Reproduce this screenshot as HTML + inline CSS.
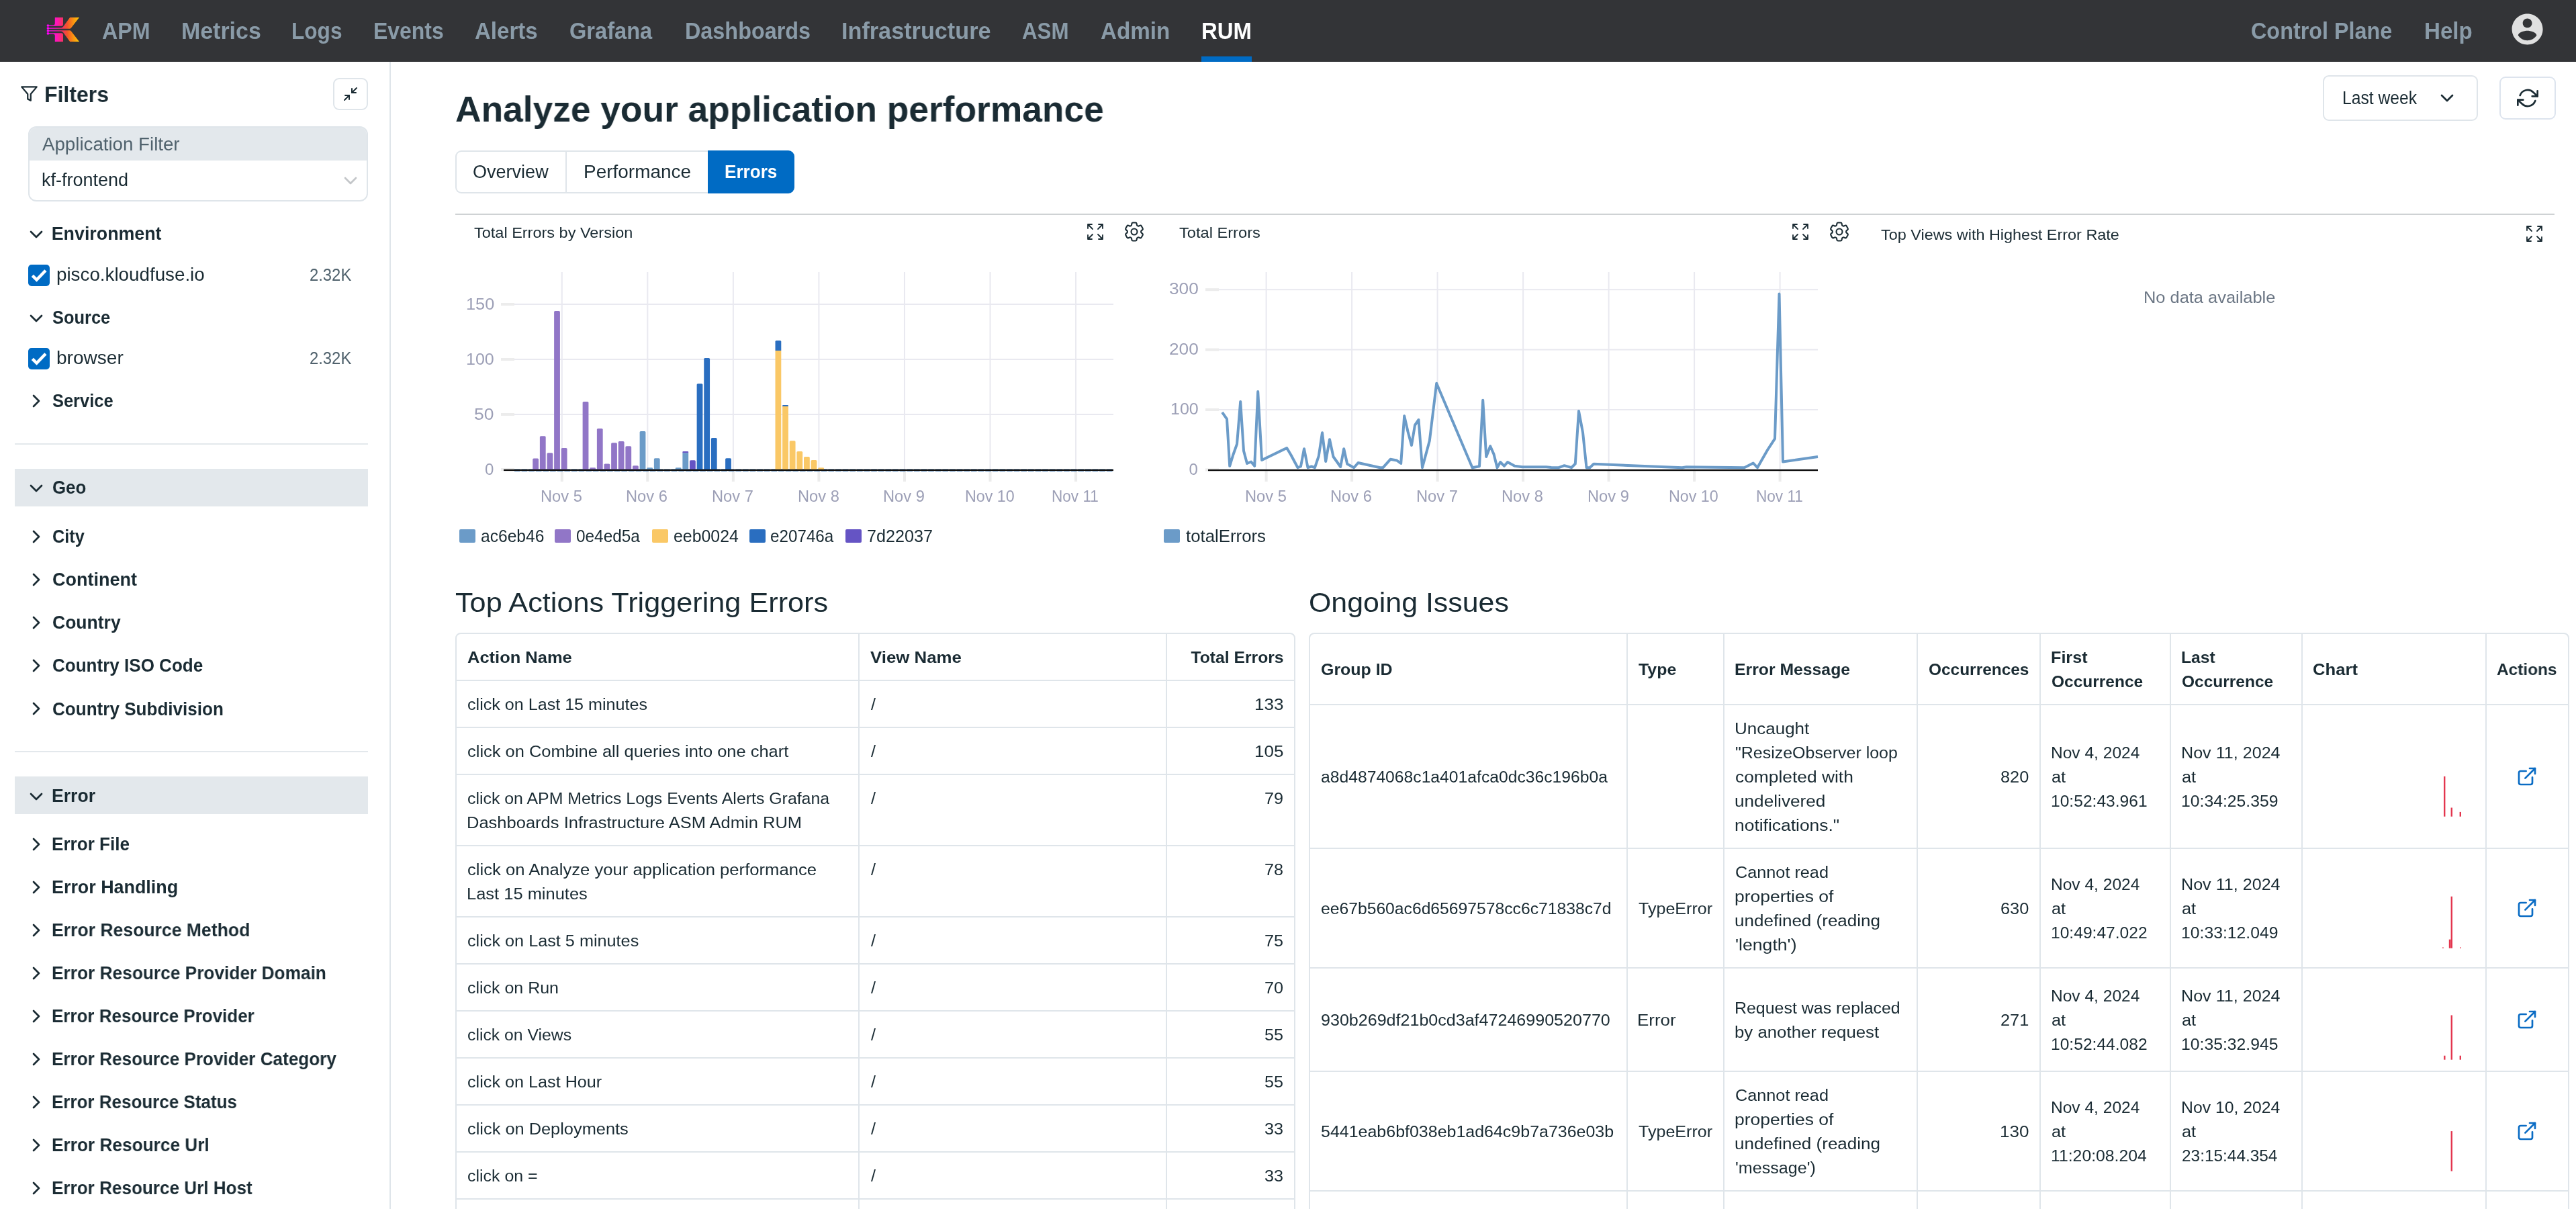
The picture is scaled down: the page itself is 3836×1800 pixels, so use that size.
<!DOCTYPE html><html><head><meta charset="utf-8"><title>RUM</title><style>html,body{margin:0;padding:0}body{width:3836px;height:1800px;position:relative;overflow:hidden;background:#fff;font-family:"Liberation Sans",sans-serif}.t{position:absolute;white-space:pre;display:inline-block;transform-origin:0 0}</style></head><body><div style="position:absolute;left:0;top:0;width:3836px;height:1800px;will-change:transform"><div style="position:absolute;left:0;top:0;width:3836px;height:92px;background:#333437"></div><svg style="position:absolute;left:66px;top:22px" width="56" height="44" viewBox="66 22 56 44">
<defs><linearGradient id="lg" gradientUnits="userSpaceOnUse" x1="70" y1="0" x2="118" y2="0">
<stop offset="0" stop-color="#ff00ff"/><stop offset="0.28" stop-color="#ff14c0"/><stop offset="0.5" stop-color="#f5355e"/><stop offset="0.62" stop-color="#f4522c"/><stop offset="0.8" stop-color="#f98e12"/><stop offset="1" stop-color="#ffc808"/></linearGradient></defs>
<g fill="url(#lg)">
<path d="M81.8 25.9H94V36.3Q94 38.8 91.5 38.8H72V37.5H79Q81.8 37.5 81.8 34.6Z"/>
<path d="M81.8 62H94V51.7Q94 49.2 91.5 49.2H72V50.5H79Q81.8 50.5 81.8 53.4Z"/>
<path d="M104.1 25.9H118L105.8 41.8Q105 42.8 103.6 42.8H72V41.5H91.2Q93.3 40.8 94.3 39.4Z"/>
<path d="M104.1 62H118L105.8 46.2Q105 45.2 103.6 45.2H72V46.5H91.2Q93.3 47.2 94.3 48.6Z"/>
<circle cx="71.4" cy="38.1" r="1.8"/><circle cx="71.4" cy="42.1" r="1.8"/><circle cx="71.4" cy="45.9" r="1.8"/><circle cx="71.4" cy="49.9" r="1.8"/>
</g></svg><span class="t" style="top:27.85px;left:151.58px;font-size:35px;line-height:35px;font-weight:700;color:#8a9ba8;transform:scaleX(0.9200);">APM</span><span class="t" style="top:27.85px;left:269.56px;font-size:35px;line-height:35px;font-weight:700;color:#8a9ba8;transform:scaleX(0.9689);">Metrics</span><span class="t" style="top:27.85px;left:434.00px;font-size:35px;line-height:35px;font-weight:700;color:#8a9ba8;transform:scaleX(0.9025);">Logs</span><span class="t" style="top:27.85px;left:555.67px;font-size:35px;line-height:35px;font-weight:700;color:#8a9ba8;transform:scaleX(0.9126);">Events</span><span class="t" style="top:27.85px;left:706.56px;font-size:35px;line-height:35px;font-weight:700;color:#8a9ba8;transform:scaleX(0.9433);">Alerts</span><span class="t" style="top:27.85px;left:847.57px;font-size:35px;line-height:35px;font-weight:700;color:#8a9ba8;transform:scaleX(0.9318);">Grafana</span><span class="t" style="top:27.85px;left:1019.65px;font-size:35px;line-height:35px;font-weight:700;color:#8a9ba8;transform:scaleX(0.9246);">Dashboards</span><span class="t" style="top:27.85px;left:1253.04px;font-size:35px;line-height:35px;font-weight:700;color:#8a9ba8;transform:scaleX(0.9777);">Infrastructure</span><span class="t" style="top:27.85px;left:1522.11px;font-size:35px;line-height:35px;font-weight:700;color:#8a9ba8;transform:scaleX(0.8933);">ASM</span><span class="t" style="top:27.85px;left:1639.05px;font-size:35px;line-height:35px;font-weight:700;color:#8a9ba8;transform:scaleX(0.9481);">Admin</span><span class="t" style="top:27.85px;left:1789.12px;font-size:35px;line-height:35px;font-weight:700;color:#ffffff;transform:scaleX(0.9408);">RUM</span><span class="t" style="top:27.85px;left:3352.08px;font-size:35px;line-height:35px;font-weight:700;color:#8a9ba8;transform:scaleX(0.9244);">Control Plane</span><span class="t" style="top:27.85px;left:3610.11px;font-size:35px;line-height:35px;font-weight:700;color:#8a9ba8;transform:scaleX(0.9452);">Help</span><div style="position:absolute;left:1789px;top:84px;width:75px;height:8px;background:#006bc4"></div><svg style="position:absolute;left:3736.4px;top:16.2px" width="55.2" height="55.2" viewBox="0 0 24 24"><path fill="#e0e0e0" d="M12 2C6.48 2 2 6.48 2 12s4.48 10 10 10 10-4.48 10-10S17.52 2 12 2zm0 3c1.66 0 3 1.34 3 3s-1.34 3-3 3-3-1.34-3-3 1.34-3 3-3zm0 14.2c-2.5 0-4.71-1.28-6-3.22.03-1.99 4-3.08 6-3.08 1.99 0 5.97 1.09 6 3.08-1.29 1.94-3.5 3.22-6 3.22z"/></svg><div style="position:absolute;left:580px;top:92px;width:2px;height:1708px;background:#dfe5ea"></div><svg style="position:absolute;left:30px;top:126.3px" width="27" height="27" viewBox="0 0 24 24" fill="none" stroke="#1a2b33" stroke-width="2" stroke-linecap="round" stroke-linejoin="round"><polygon points="22 3 2 3 10 12.46 10 19 14 21 14 12.46 22 3"/></svg><span class="t" style="top:124.25px;left:65.86px;font-size:33px;line-height:33px;font-weight:700;color:#1a2b33;transform:scaleX(0.9688);">Filters</span><div style="position:absolute;left:496px;top:116px;width:48px;height:44px;border:2px solid #dfe5ea;border-radius:9px"></div><svg style="position:absolute;left:510.1px;top:128.1px" width="24" height="24" viewBox="0 0 24 24" fill="none" stroke="#1a2b33" stroke-width="2" stroke-linecap="round" stroke-linejoin="round"><polyline points="4 14 10 14 10 20"/><polyline points="20 10 14 10 14 4"/><line x1="14" y1="10" x2="21" y2="3"/><line x1="3" y1="21" x2="10" y2="14"/></svg><div style="position:absolute;left:42px;top:188px;width:502px;height:108px;border:2px solid #dfe5ea;border-radius:12px;overflow:hidden"><div style="position:absolute;left:-2px;top:-2px;width:506px;height:51px;background:#e3e8ec;border-radius:10px 10px 0 0"></div></div><span class="t" style="top:201.82px;left:62.50px;font-size:26.8px;line-height:26.8px;font-weight:400;color:#50626d;transform:scaleX(1.0328);">Application Filter</span><span class="t" style="top:254.82px;left:62.48px;font-size:26.8px;line-height:26.8px;font-weight:400;color:#1a2b33;transform:scaleX(1.0080);">kf-frontend</span><svg style="position:absolute;left:505.5px;top:253px" width="32" height="32" viewBox="0 0 24 24" fill="none" stroke="#c3c6c9" stroke-width="2" stroke-linecap="round" stroke-linejoin="round"><polyline points="6 9 12 15 18 9"/></svg><svg style="position:absolute;left:38.3px;top:333.1px" width="32" height="32" viewBox="0 0 24 24" fill="none" stroke="#1a2b33" stroke-width="2" stroke-linecap="round" stroke-linejoin="round"><polyline points="6 9 12 15 18 9"/></svg><span class="t" style="top:335.32px;left:76.75px;font-size:26.8px;line-height:26.8px;font-weight:700;color:#1a2b33;">Environment</span><div style="position:absolute;left:42px;top:394px;width:32px;height:32px;border-radius:5px;background:#006bc4"></div><svg style="position:absolute;left:42px;top:394px" width="32" height="32" viewBox="0 0 32 32" fill="none" stroke="#fff" stroke-width="4.5" stroke-linecap="butt" stroke-linejoin="miter"><polyline points="6.3 16.3 12.6 22.5 25.9 8.8"/></svg><span class="t" style="top:395.82px;left:83.53px;font-size:26.8px;line-height:26.8px;font-weight:400;color:#1a2b33;transform:scaleX(1.0362);">pisco.kloudfuse.io</span><span class="t" style="top:397.35px;left:461.05px;font-size:25px;line-height:25px;font-weight:400;color:#50626d;transform:scaleX(0.9531);">2.32K</span><svg style="position:absolute;left:38.3px;top:457.6px" width="32" height="32" viewBox="0 0 24 24" fill="none" stroke="#1a2b33" stroke-width="2" stroke-linecap="round" stroke-linejoin="round"><polyline points="6 9 12 15 18 9"/></svg><span class="t" style="top:459.82px;left:77.80px;font-size:26.8px;line-height:26.8px;font-weight:700;color:#1a2b33;transform:scaleX(0.9494);">Source</span><div style="position:absolute;left:42px;top:518px;width:32px;height:32px;border-radius:5px;background:#006bc4"></div><svg style="position:absolute;left:42px;top:518px" width="32" height="32" viewBox="0 0 32 32" fill="none" stroke="#fff" stroke-width="4.5" stroke-linecap="butt" stroke-linejoin="miter"><polyline points="6.3 16.3 12.6 22.5 25.9 8.8"/></svg><span class="t" style="top:519.82px;left:83.51px;font-size:26.8px;line-height:26.8px;font-weight:400;color:#1a2b33;transform:scaleX(1.0473);">browser</span><span class="t" style="top:521.35px;left:461.05px;font-size:25px;line-height:25px;font-weight:400;color:#50626d;transform:scaleX(0.9531);">2.32K</span><svg style="position:absolute;left:38.2px;top:580.5px" width="32" height="32" viewBox="0 0 24 24" fill="none" stroke="#1a2b33" stroke-width="2" stroke-linecap="round" stroke-linejoin="round"><polyline points="9 18 15 12 9 6"/></svg><span class="t" style="top:583.82px;left:77.80px;font-size:26.8px;line-height:26.8px;font-weight:700;color:#1a2b33;transform:scaleX(0.9495);">Service</span><div style="position:absolute;left:22px;top:660px;width:526px;height:2px;background:#e3e8ec"></div><div style="position:absolute;left:22px;top:698px;width:526px;height:56px;background:#e3e8ec"></div><svg style="position:absolute;left:38.3px;top:711.1px" width="32" height="32" viewBox="0 0 24 24" fill="none" stroke="#1a2b33" stroke-width="2" stroke-linecap="round" stroke-linejoin="round"><polyline points="6 9 12 15 18 9"/></svg><span class="t" style="top:713.32px;left:77.78px;font-size:26.8px;line-height:26.8px;font-weight:700;color:#1a2b33;transform:scaleX(0.9650);">Geo</span><svg style="position:absolute;left:38.2px;top:782.5px" width="32" height="32" viewBox="0 0 24 24" fill="none" stroke="#1a2b33" stroke-width="2" stroke-linecap="round" stroke-linejoin="round"><polyline points="9 18 15 12 9 6"/></svg><span class="t" style="top:785.82px;left:77.81px;font-size:26.8px;line-height:26.8px;font-weight:700;color:#1a2b33;transform:scaleX(0.9450);">City</span><svg style="position:absolute;left:38.2px;top:846.7px" width="32" height="32" viewBox="0 0 24 24" fill="none" stroke="#1a2b33" stroke-width="2" stroke-linecap="round" stroke-linejoin="round"><polyline points="9 18 15 12 9 6"/></svg><span class="t" style="top:850.02px;left:77.74px;font-size:26.8px;line-height:26.8px;font-weight:700;color:#1a2b33;transform:scaleX(1.0081);">Continent</span><svg style="position:absolute;left:38.2px;top:910.9px" width="32" height="32" viewBox="0 0 24 24" fill="none" stroke="#1a2b33" stroke-width="2" stroke-linecap="round" stroke-linejoin="round"><polyline points="9 18 15 12 9 6"/></svg><span class="t" style="top:914.22px;left:77.76px;font-size:26.8px;line-height:26.8px;font-weight:700;color:#1a2b33;transform:scaleX(0.9902);">Country</span><svg style="position:absolute;left:38.2px;top:975.1px" width="32" height="32" viewBox="0 0 24 24" fill="none" stroke="#1a2b33" stroke-width="2" stroke-linecap="round" stroke-linejoin="round"><polyline points="9 18 15 12 9 6"/></svg><span class="t" style="top:978.42px;left:77.78px;font-size:26.8px;line-height:26.8px;font-weight:700;color:#1a2b33;transform:scaleX(0.9716);">Country ISO Code</span><svg style="position:absolute;left:38.2px;top:1039.3px" width="32" height="32" viewBox="0 0 24 24" fill="none" stroke="#1a2b33" stroke-width="2" stroke-linecap="round" stroke-linejoin="round"><polyline points="9 18 15 12 9 6"/></svg><span class="t" style="top:1042.62px;left:77.78px;font-size:26.8px;line-height:26.8px;font-weight:700;color:#1a2b33;transform:scaleX(0.9731);">Country Subdivision</span><div style="position:absolute;left:22px;top:1118px;width:526px;height:2px;background:#e3e8ec"></div><div style="position:absolute;left:22px;top:1156px;width:526px;height:56px;background:#e3e8ec"></div><svg style="position:absolute;left:38.3px;top:1169.6px" width="32" height="32" viewBox="0 0 24 24" fill="none" stroke="#1a2b33" stroke-width="2" stroke-linecap="round" stroke-linejoin="round"><polyline points="6 9 12 15 18 9"/></svg><span class="t" style="top:1171.82px;left:76.77px;font-size:26.8px;line-height:26.8px;font-weight:700;color:#1a2b33;transform:scaleX(0.9921);">Error</span><svg style="position:absolute;left:38.2px;top:1240.9px" width="32" height="32" viewBox="0 0 24 24" fill="none" stroke="#1a2b33" stroke-width="2" stroke-linecap="round" stroke-linejoin="round"><polyline points="9 18 15 12 9 6"/></svg><span class="t" style="top:1244.22px;left:76.80px;font-size:26.8px;line-height:26.8px;font-weight:700;color:#1a2b33;transform:scaleX(0.9741);">Error File</span><svg style="position:absolute;left:38.2px;top:1304.9px" width="32" height="32" viewBox="0 0 24 24" fill="none" stroke="#1a2b33" stroke-width="2" stroke-linecap="round" stroke-linejoin="round"><polyline points="9 18 15 12 9 6"/></svg><span class="t" style="top:1308.22px;left:76.74px;font-size:26.8px;line-height:26.8px;font-weight:700;color:#1a2b33;transform:scaleX(1.0027);">Error Handling</span><svg style="position:absolute;left:38.2px;top:1368.9px" width="32" height="32" viewBox="0 0 24 24" fill="none" stroke="#1a2b33" stroke-width="2" stroke-linecap="round" stroke-linejoin="round"><polyline points="9 18 15 12 9 6"/></svg><span class="t" style="top:1372.22px;left:76.77px;font-size:26.8px;line-height:26.8px;font-weight:700;color:#1a2b33;transform:scaleX(0.9915);">Error Resource Method</span><svg style="position:absolute;left:38.2px;top:1432.9px" width="32" height="32" viewBox="0 0 24 24" fill="none" stroke="#1a2b33" stroke-width="2" stroke-linecap="round" stroke-linejoin="round"><polyline points="9 18 15 12 9 6"/></svg><span class="t" style="top:1436.22px;left:76.79px;font-size:26.8px;line-height:26.8px;font-weight:700;color:#1a2b33;transform:scaleX(0.9806);">Error Resource Provider Domain</span><svg style="position:absolute;left:38.2px;top:1496.9px" width="32" height="32" viewBox="0 0 24 24" fill="none" stroke="#1a2b33" stroke-width="2" stroke-linecap="round" stroke-linejoin="round"><polyline points="9 18 15 12 9 6"/></svg><span class="t" style="top:1500.22px;left:76.81px;font-size:26.8px;line-height:26.8px;font-weight:700;color:#1a2b33;transform:scaleX(0.9693);">Error Resource Provider</span><svg style="position:absolute;left:38.2px;top:1560.9px" width="32" height="32" viewBox="0 0 24 24" fill="none" stroke="#1a2b33" stroke-width="2" stroke-linecap="round" stroke-linejoin="round"><polyline points="9 18 15 12 9 6"/></svg><span class="t" style="top:1564.22px;left:76.80px;font-size:26.8px;line-height:26.8px;font-weight:700;color:#1a2b33;transform:scaleX(0.9746);">Error Resource Provider Category</span><svg style="position:absolute;left:38.2px;top:1624.9px" width="32" height="32" viewBox="0 0 24 24" fill="none" stroke="#1a2b33" stroke-width="2" stroke-linecap="round" stroke-linejoin="round"><polyline points="9 18 15 12 9 6"/></svg><span class="t" style="top:1628.22px;left:76.81px;font-size:26.8px;line-height:26.8px;font-weight:700;color:#1a2b33;transform:scaleX(0.9698);">Error Resource Status</span><svg style="position:absolute;left:38.2px;top:1688.9px" width="32" height="32" viewBox="0 0 24 24" fill="none" stroke="#1a2b33" stroke-width="2" stroke-linecap="round" stroke-linejoin="round"><polyline points="9 18 15 12 9 6"/></svg><span class="t" style="top:1692.22px;left:76.79px;font-size:26.8px;line-height:26.8px;font-weight:700;color:#1a2b33;transform:scaleX(0.9788);">Error Resource Url</span><svg style="position:absolute;left:38.2px;top:1752.9px" width="32" height="32" viewBox="0 0 24 24" fill="none" stroke="#1a2b33" stroke-width="2" stroke-linecap="round" stroke-linejoin="round"><polyline points="9 18 15 12 9 6"/></svg><span class="t" style="top:1756.22px;left:76.80px;font-size:26.8px;line-height:26.8px;font-weight:700;color:#1a2b33;transform:scaleX(0.9738);">Error Resource Url Host</span><span class="t" style="top:136.38px;left:677.75px;font-size:53.5px;line-height:53.5px;font-weight:700;color:#1a2b33;transform:scaleX(0.9964);">Analyze your application performance</span><div style="position:absolute;left:678px;top:224px;width:376px;height:60px;border:2px solid #dfe5ea;border-right:none;border-radius:9px 0 0 9px"></div><div style="position:absolute;left:842px;top:224px;width:2px;height:64px;background:#dfe5ea"></div><div style="position:absolute;left:1054px;top:224px;width:129px;height:64px;background:#006bc4;border-radius:0 9px 9px 0"></div><span class="t" style="top:243.32px;left:703.99px;font-size:26.8px;line-height:26.8px;font-weight:400;color:#1a2b33;transform:scaleX(1.0090);">Overview</span><span class="t" style="top:243.32px;left:868.66px;font-size:26.8px;line-height:26.8px;font-weight:400;color:#1a2b33;transform:scaleX(1.0433);">Performance</span><span class="t" style="top:243.32px;left:1079.05px;font-size:26.8px;line-height:26.8px;font-weight:700;color:#ffffff;transform:scaleX(0.9740);">Errors</span><div style="position:absolute;left:3459px;top:112px;width:227px;height:64px;border:2px solid #dfe5ea;border-radius:9px"></div><span class="t" style="top:132.82px;left:3488.16px;font-size:26.8px;line-height:26.8px;font-weight:400;color:#1a2b33;transform:scaleX(0.9202);">Last week</span><svg style="position:absolute;left:3627.8px;top:130px" width="32" height="32" viewBox="0 0 24 24" fill="none" stroke="#1a2b33" stroke-width="2" stroke-linecap="round" stroke-linejoin="round"><polyline points="6 9 12 15 18 9"/></svg><div style="position:absolute;left:3722px;top:114px;width:80px;height:60px;border:2px solid #dde4ee;border-radius:9px"></div><svg style="position:absolute;left:3748px;top:130.1px" width="32" height="32" viewBox="0 0 24 24" fill="none" stroke="#1a2b33" stroke-width="2" stroke-linecap="round" stroke-linejoin="round"><polyline points="23 4 23 10 17 10"/><polyline points="1 20 1 14 7 14"/><path d="M3.51 9a9 9 0 0 1 14.85-3.36L23 10M1 14l4.64 4.36A9 9 0 0 0 20.49 15"/></svg><div style="position:absolute;left:678px;top:318px;width:3126px;height:2px;background:#cfd2d4"></div><span class="t" style="top:335.06px;left:706.00px;font-size:22.7px;line-height:22.7px;font-weight:400;color:#1a2b33;transform:scaleX(1.0352);">Total Errors by Version</span><svg style="position:absolute;left:1615px;top:329px" width="32" height="32" viewBox="0 0 24 24" fill="none" stroke="#1a2b33" stroke-width="1.35" stroke-linecap="round" stroke-linejoin="round"><path d="M3.75 3.75v4.5m0-4.5h4.5m-4.5 0L9 9M3.75 20.25v-4.5m0 4.5h4.5m-4.5 0L9 15M20.25 3.75h-4.5m4.5 0v4.5m0-4.5L15 9m5.25 11.25h-4.5m4.5 0v-4.5m0 4.5L15 15"/></svg><svg style="position:absolute;left:1670.95px;top:326.65px" width="36" height="36" viewBox="0 0 24 24" fill="none" stroke="#1a2b33" stroke-width="1.4" stroke-linecap="round" stroke-linejoin="round"><path d="M9.594 3.94c.09-.542.56-.94 1.11-.94h2.593c.55 0 1.02.398 1.11.94l.213 1.281c.063.374.313.686.645.87.074.04.147.083.22.127.325.196.72.257 1.075.124l1.217-.456a1.125 1.125 0 0 1 1.37.49l1.296 2.247a1.125 1.125 0 0 1-.26 1.431l-1.003.827c-.293.241-.438.613-.43.992a7.723 7.723 0 0 1 0 .255c-.008.378.137.75.43.991l1.004.827c.424.35.534.955.26 1.43l-1.298 2.247a1.125 1.125 0 0 1-1.369.491l-1.217-.456c-.355-.133-.75-.072-1.076.124a6.47 6.47 0 0 1-.22.128c-.331.183-.581.495-.644.869l-.213 1.281c-.09.543-.56.94-1.11.94h-2.594c-.55 0-1.019-.398-1.11-.94l-.213-1.281c-.062-.374-.312-.686-.644-.87a6.52 6.52 0 0 1-.22-.127c-.325-.196-.72-.257-1.076-.124l-1.217.456a1.125 1.125 0 0 1-1.369-.49l-1.297-2.247a1.125 1.125 0 0 1 .26-1.431l1.004-.827c.292-.24.437-.613.43-.991a6.932 6.932 0 0 1 0-.255c.007-.38-.138-.751-.43-.992l-1.004-.827a1.125 1.125 0 0 1-.26-1.43l1.297-2.247a1.125 1.125 0 0 1 1.37-.491l1.216.456c.356.133.751.072 1.076-.124.072-.044.146-.086.22-.128.332-.183.582-.495.644-.869l.214-1.28Z"/><path d="M15 12a3 3 0 1 1-6 0 3 3 0 0 1 6 0Z"/></svg><span class="t" style="top:335.31px;left:1755.60px;font-size:22.7px;line-height:22.7px;font-weight:400;color:#1a2b33;transform:scaleX(1.0417);">Total Errors</span><svg style="position:absolute;left:2665px;top:329px" width="32" height="32" viewBox="0 0 24 24" fill="none" stroke="#1a2b33" stroke-width="1.35" stroke-linecap="round" stroke-linejoin="round"><path d="M3.75 3.75v4.5m0-4.5h4.5m-4.5 0L9 9M3.75 20.25v-4.5m0 4.5h4.5m-4.5 0L9 15M20.25 3.75h-4.5m4.5 0v4.5m0-4.5L15 9m5.25 11.25h-4.5m4.5 0v-4.5m0 4.5L15 15"/></svg><svg style="position:absolute;left:2720.95px;top:326.65px" width="36" height="36" viewBox="0 0 24 24" fill="none" stroke="#1a2b33" stroke-width="1.4" stroke-linecap="round" stroke-linejoin="round"><path d="M9.594 3.94c.09-.542.56-.94 1.11-.94h2.593c.55 0 1.02.398 1.11.94l.213 1.281c.063.374.313.686.645.87.074.04.147.083.22.127.325.196.72.257 1.075.124l1.217-.456a1.125 1.125 0 0 1 1.37.49l1.296 2.247a1.125 1.125 0 0 1-.26 1.431l-1.003.827c-.293.241-.438.613-.43.992a7.723 7.723 0 0 1 0 .255c-.008.378.137.75.43.991l1.004.827c.424.35.534.955.26 1.43l-1.298 2.247a1.125 1.125 0 0 1-1.369.491l-1.217-.456c-.355-.133-.75-.072-1.076.124a6.47 6.47 0 0 1-.22.128c-.331.183-.581.495-.644.869l-.213 1.281c-.09.543-.56.94-1.11.94h-2.594c-.55 0-1.019-.398-1.11-.94l-.213-1.281c-.062-.374-.312-.686-.644-.87a6.52 6.52 0 0 1-.22-.127c-.325-.196-.72-.257-1.076-.124l-1.217.456a1.125 1.125 0 0 1-1.369-.49l-1.297-2.247a1.125 1.125 0 0 1 .26-1.431l1.004-.827c.292-.24.437-.613.43-.991a6.932 6.932 0 0 1 0-.255c.007-.38-.138-.751-.43-.992l-1.004-.827a1.125 1.125 0 0 1-.26-1.43l1.297-2.247a1.125 1.125 0 0 1 1.37-.491l1.216.456c.356.133.751.072 1.076-.124.072-.044.146-.086.22-.128.332-.183.582-.495.644-.869l.214-1.28Z"/><path d="M15 12a3 3 0 1 1-6 0 3 3 0 0 1 6 0Z"/></svg><span class="t" style="top:338.31px;left:2800.50px;font-size:22.7px;line-height:22.7px;font-weight:400;color:#1a2b33;transform:scaleX(1.0321);">Top Views with Highest Error Rate</span><svg style="position:absolute;left:3758px;top:332px" width="32" height="32" viewBox="0 0 24 24" fill="none" stroke="#1a2b33" stroke-width="1.35" stroke-linecap="round" stroke-linejoin="round"><path d="M3.75 3.75v4.5m0-4.5h4.5m-4.5 0L9 9M3.75 20.25v-4.5m0 4.5h4.5m-4.5 0L9 15M20.25 3.75h-4.5m4.5 0v4.5m0-4.5L15 9m5.25 11.25h-4.5m4.5 0v-4.5m0 4.5L15 15"/></svg><span class="t" style="top:430.61px;left:3192.44px;font-size:24.7px;line-height:24.7px;font-weight:400;color:#6b7684;transform:scaleX(1.0293);">No data available</span><svg style="position:absolute;left:0;top:380px" width="3836" height="460" viewBox="0 380 3836 460"><rect x="835.75" y="405" width="2" height="295" fill="#e9e9f0"/><rect x="834.75" y="700" width="4" height="17" fill="#ececec"/><rect x="963.3" y="405" width="2" height="295" fill="#e9e9f0"/><rect x="962.3" y="700" width="4" height="17" fill="#ececec"/><rect x="1090.85" y="405" width="2" height="295" fill="#e9e9f0"/><rect x="1089.85" y="700" width="4" height="17" fill="#ececec"/><rect x="1218.4" y="405" width="2" height="295" fill="#e9e9f0"/><rect x="1217.4" y="700" width="4" height="17" fill="#ececec"/><rect x="1345.95" y="405" width="2" height="295" fill="#e9e9f0"/><rect x="1344.95" y="700" width="4" height="17" fill="#ececec"/><rect x="1473.5" y="405" width="2" height="295" fill="#e9e9f0"/><rect x="1472.5" y="700" width="4" height="17" fill="#ececec"/><rect x="1601.05" y="405" width="2" height="295" fill="#e9e9f0"/><rect x="1600.05" y="700" width="4" height="17" fill="#ececec"/><rect x="766" y="452" width="892" height="2" fill="#e9e9f0"/><rect x="746" y="451" width="20" height="4" fill="#ececec"/><rect x="766" y="534" width="892" height="2" fill="#e9e9f0"/><rect x="746" y="533" width="20" height="4" fill="#ececec"/><rect x="766" y="616" width="892" height="2" fill="#e9e9f0"/><rect x="746" y="615" width="20" height="4" fill="#ececec"/><rect x="766" y="698" width="892" height="2" fill="#e9e9f0"/><rect x="746" y="697" width="20" height="4" fill="#ececec"/><line x1="766" y1="700.2" x2="1658" y2="700.2" stroke="#3f7fc0" stroke-width="3.2" stroke-dasharray="8.6 2.025"/><path d="M793.25 699.00V684.10Q793.25 682.50 794.85 682.50H800.45Q802.05 682.50 802.05 684.10V699.00Z" fill="#9176c7"/><path d="M803.88 699.00V650.85Q803.88 649.25 805.48 649.25H811.07Q812.67 649.25 812.67 650.85V699.00Z" fill="#9176c7"/><path d="M814.50 699.00V675.85Q814.50 674.25 816.10 674.25H821.70Q823.30 674.25 823.30 675.85V699.00Z" fill="#9176c7"/><path d="M825.12 699.00V464.60Q825.12 463.00 826.73 463.00H832.32Q833.92 463.00 833.92 464.60V699.00Z" fill="#9176c7"/><path d="M835.75 699.00V668.60Q835.75 667.00 837.35 667.00H842.95Q844.55 667.00 844.55 668.60V699.00Z" fill="#9176c7"/><path d="M867.62 699.00V599.60Q867.62 598.00 869.23 598.00H874.82Q876.42 598.00 876.42 599.60V699.00Z" fill="#9176c7"/><path d="M878.25 699.00V697.65Q878.25 696.30 879.60 696.30H885.70Q887.05 696.30 887.05 697.65V699.00Z" fill="#9176c7"/><path d="M888.88 699.00V639.60Q888.88 638.00 890.48 638.00H896.07Q897.67 638.00 897.67 639.60V699.00Z" fill="#9176c7"/><path d="M899.50 699.00V692.10Q899.50 690.50 901.10 690.50H906.70Q908.30 690.50 908.30 692.10V699.00Z" fill="#9176c7"/><path d="M910.12 699.00V660.80Q910.12 659.20 911.73 659.20H917.32Q918.92 659.20 918.92 660.80V699.00Z" fill="#9176c7"/><path d="M920.75 699.00V658.60Q920.75 657.00 922.35 657.00H927.95Q929.55 657.00 929.55 658.60V699.00Z" fill="#9176c7"/><path d="M931.38 699.00V665.80Q931.38 664.20 932.98 664.20H938.57Q940.17 664.20 940.17 665.80V699.00Z" fill="#9176c7"/><path d="M942.00 699.00V694.80Q942.00 693.20 943.60 693.20H949.20Q950.80 693.20 950.80 694.80V699.00Z" fill="#9176c7"/><path d="M952.62 699.00V643.60Q952.62 642.00 954.23 642.00H959.82Q961.42 642.00 961.42 643.60V699.00Z" fill="#6b9bc8"/><path d="M963.25 699.00V697.65Q963.25 696.30 964.60 696.30H970.70Q972.05 696.30 972.05 697.65V699.00Z" fill="#6b9bc8"/><path d="M973.88 699.00V683.80Q973.88 682.20 975.48 682.20H981.07Q982.67 682.20 982.67 683.80V699.00Z" fill="#6b9bc8"/><path d="M1005.75 699.00V697.65Q1005.75 696.30 1007.10 696.30H1013.20Q1014.55 696.30 1014.55 697.65V699.00Z" fill="#6b9bc8"/><rect x="1016.38" y="674.20" width="8.8" height="24.80" fill="#6b9bc8"/><path d="M1016.38 674.20V673.10Q1016.38 672.00 1017.48 672.00H1024.07Q1025.17 672.00 1025.17 673.10V674.20Z" fill="#6554c4"/><path d="M1027.00 699.00V686.80Q1027.00 685.20 1028.60 685.20H1034.20Q1035.80 685.20 1035.80 686.80V699.00Z" fill="#6554c4"/><path d="M1037.62 699.00V572.80Q1037.62 571.20 1039.22 571.20H1044.83Q1046.42 571.20 1046.42 572.80V699.00Z" fill="#2a6ec0"/><path d="M1048.25 699.00V534.60Q1048.25 533.00 1049.85 533.00H1055.45Q1057.05 533.00 1057.05 534.60V699.00Z" fill="#2a6ec0"/><path d="M1058.88 699.00V653.60Q1058.88 652.00 1060.47 652.00H1066.08Q1067.67 652.00 1067.67 653.60V699.00Z" fill="#2a6ec0"/><path d="M1080.12 699.00V683.80Q1080.12 682.20 1081.72 682.20H1087.33Q1088.92 682.20 1088.92 683.80V699.00Z" fill="#2a6ec0"/><rect x="1154.50" y="522.00" width="8.8" height="177.00" fill="#fac866"/><path d="M1154.50 522.00V508.60Q1154.50 507.00 1156.10 507.00H1161.70Q1163.30 507.00 1163.30 508.60V522.00Z" fill="#2a6ec0"/><rect x="1165.12" y="605.00" width="8.8" height="94.00" fill="#fac866"/><path d="M1165.12 605.00V604.00Q1165.12 603.00 1166.12 603.00H1172.92Q1173.92 603.00 1173.92 604.00V605.00Z" fill="#2a6ec0"/><path d="M1175.75 699.00V657.80Q1175.75 656.20 1177.35 656.20H1182.95Q1184.55 656.20 1184.55 657.80V699.00Z" fill="#fac866"/><path d="M1186.38 699.00V673.60Q1186.38 672.00 1187.97 672.00H1193.58Q1195.17 672.00 1195.17 673.60V699.00Z" fill="#fac866"/><path d="M1197.00 699.00V681.60Q1197.00 680.00 1198.60 680.00H1204.20Q1205.80 680.00 1205.80 681.60V699.00Z" fill="#fac866"/><path d="M1207.62 699.00V686.60Q1207.62 685.00 1209.22 685.00H1214.83Q1216.42 685.00 1216.42 686.60V699.00Z" fill="#fac866"/><path d="M1218.25 699.00V697.65Q1218.25 696.30 1219.60 696.30H1225.70Q1227.05 696.30 1227.05 697.65V699.00Z" fill="#fac866"/><rect x="750" y="698.7" width="908" height="2.4" fill="#111"/><rect x="1884.6" y="405" width="2" height="295" fill="#e9e9f0"/><rect x="1883.6" y="700" width="4" height="17" fill="#ececec"/><rect x="2012.1" y="405" width="2" height="295" fill="#e9e9f0"/><rect x="2011.1" y="700" width="4" height="17" fill="#ececec"/><rect x="2139.6" y="405" width="2" height="295" fill="#e9e9f0"/><rect x="2138.6" y="700" width="4" height="17" fill="#ececec"/><rect x="2267.1" y="405" width="2" height="295" fill="#e9e9f0"/><rect x="2266.1" y="700" width="4" height="17" fill="#ececec"/><rect x="2394.6" y="405" width="2" height="295" fill="#e9e9f0"/><rect x="2393.6" y="700" width="4" height="17" fill="#ececec"/><rect x="2522.1" y="405" width="2" height="295" fill="#e9e9f0"/><rect x="2521.1" y="700" width="4" height="17" fill="#ececec"/><rect x="2649.6" y="405" width="2" height="295" fill="#e9e9f0"/><rect x="2648.6" y="700" width="4" height="17" fill="#ececec"/><rect x="1815" y="430.2" width="892" height="2" fill="#e9e9f0"/><rect x="1795" y="429.2" width="20" height="4" fill="#ececec"/><rect x="1815" y="519.6" width="892" height="2" fill="#e9e9f0"/><rect x="1795" y="518.6" width="20" height="4" fill="#ececec"/><rect x="1815" y="609" width="892" height="2" fill="#e9e9f0"/><rect x="1795" y="608" width="20" height="4" fill="#ececec"/><rect x="1815" y="698.4" width="892" height="2" fill="#e9e9f0"/><rect x="1795" y="697.4" width="20" height="4" fill="#ececec"/><polyline fill="none" stroke="#6b9bc8" stroke-width="4" stroke-linejoin="round" stroke-linecap="butt" points="1820.0,613.8 1827.0,623.8 1831.2,693.8 1836.2,677.5 1842.0,661.2 1847.2,598.0 1852.0,671.2 1857.0,690.0 1863.0,687.5 1868.2,693.8 1873.2,583.0 1879.0,685.0 1916.2,667.0 1922.5,677.5 1932.5,696.2 1937.0,694.5 1942.0,668.2 1947.5,696.2 1953.0,694.5 1958.0,696.2 1963.8,678.8 1969.0,644.2 1974.2,687.0 1980.0,654.2 1985.5,680.0 1996.2,695.0 2001.2,668.2 2006.2,690.8 2016.2,696.2 2022.5,689.0 2055.0,696.2 2059.5,696.2 2070.5,683.8 2080.0,685.5 2086.2,690.0 2091.2,619.2 2096.5,642.5 2102.0,663.0 2107.0,633.0 2112.5,625.0 2118.0,696.2 2128.8,656.2 2139.2,570.8 2192.5,696.2 2203.0,694.2 2208.2,595.8 2213.2,680.0 2219.2,664.2 2224.5,676.2 2229.5,696.2 2234.2,688.0 2240.0,693.8 2245.0,688.0 2255.5,693.8 2267.0,695.2 2302.5,695.2 2310.0,696.0 2321.2,696.2 2329.5,693.2 2340.0,696.2 2345.8,690.5 2351.0,612.0 2357.0,643.8 2362.5,696.2 2367.5,696.2 2373.2,690.8 2505.0,696.2 2511.2,695.2 2597.5,696.2 2610.8,689.5 2617.0,696.2 2632.0,670.0 2643.0,653.2 2649.5,437.5 2655.0,687.5 2707.0,680.0"/><rect x="1799" y="698.8" width="908" height="2.4" fill="#111"/></svg><span class="t" style="top:440.60px;left:693.89px;font-size:24px;line-height:24px;font-weight:400;color:#9c9fb6;transform:scaleX(1.0541);">150</span><span class="t" style="top:522.60px;left:694.31px;font-size:24px;line-height:24px;font-weight:400;color:#9c9fb6;transform:scaleX(1.0432);">100</span><span class="t" style="top:604.60px;left:706.40px;font-size:24px;line-height:24px;font-weight:400;color:#9c9fb6;transform:scaleX(1.1000);">50</span><span class="t" style="top:686.60px;left:722.00px;font-size:24px;line-height:24px;font-weight:400;color:#9c9fb6;">0</span><span class="t" style="top:418.40px;left:1741.01px;font-size:24px;line-height:24px;font-weight:400;color:#9c9fb6;transform:scaleX(1.0921);">300</span><span class="t" style="top:507.80px;left:1741.01px;font-size:24px;line-height:24px;font-weight:400;color:#9c9fb6;transform:scaleX(1.0921);">200</span><span class="t" style="top:597.20px;left:1742.91px;font-size:24px;line-height:24px;font-weight:400;color:#9c9fb6;transform:scaleX(1.0432);">100</span><span class="t" style="top:686.60px;left:1770.60px;font-size:24px;line-height:24px;font-weight:400;color:#9c9fb6;">0</span><span class="t" style="top:727.40px;left:804.88px;font-size:24px;line-height:24px;font-weight:400;color:#9c9fb6;transform:scaleX(0.9867);">Nov 5</span><span class="t" style="top:727.40px;left:1853.73px;font-size:24px;line-height:24px;font-weight:400;color:#9c9fb6;transform:scaleX(0.9867);">Nov 5</span><span class="t" style="top:727.40px;left:932.43px;font-size:24px;line-height:24px;font-weight:400;color:#9c9fb6;transform:scaleX(0.9867);">Nov 6</span><span class="t" style="top:727.40px;left:1981.23px;font-size:24px;line-height:24px;font-weight:400;color:#9c9fb6;transform:scaleX(0.9867);">Nov 6</span><span class="t" style="top:727.40px;left:1059.98px;font-size:24px;line-height:24px;font-weight:400;color:#9c9fb6;transform:scaleX(0.9867);">Nov 7</span><span class="t" style="top:727.40px;left:2108.73px;font-size:24px;line-height:24px;font-weight:400;color:#9c9fb6;transform:scaleX(0.9867);">Nov 7</span><span class="t" style="top:727.40px;left:1187.53px;font-size:24px;line-height:24px;font-weight:400;color:#9c9fb6;transform:scaleX(0.9867);">Nov 8</span><span class="t" style="top:727.40px;left:2236.23px;font-size:24px;line-height:24px;font-weight:400;color:#9c9fb6;transform:scaleX(0.9867);">Nov 8</span><span class="t" style="top:727.40px;left:1315.08px;font-size:24px;line-height:24px;font-weight:400;color:#9c9fb6;transform:scaleX(0.9867);">Nov 9</span><span class="t" style="top:727.40px;left:2363.73px;font-size:24px;line-height:24px;font-weight:400;color:#9c9fb6;transform:scaleX(0.9867);">Nov 9</span><span class="t" style="top:727.40px;left:1436.89px;font-size:24px;line-height:24px;font-weight:400;color:#9c9fb6;transform:scaleX(0.9692);">Nov 10</span><span class="t" style="top:727.40px;left:2485.49px;font-size:24px;line-height:24px;font-weight:400;color:#9c9fb6;transform:scaleX(0.9692);">Nov 10</span><span class="t" style="top:727.40px;left:1566.49px;font-size:24px;line-height:24px;font-weight:400;color:#9c9fb6;transform:scaleX(0.9401);">Nov 11</span><span class="t" style="top:727.40px;left:2615.04px;font-size:24px;line-height:24px;font-weight:400;color:#9c9fb6;transform:scaleX(0.9401);">Nov 11</span><div style="position:absolute;left:684.25px;top:788px;width:23.5px;height:19.75px;border-radius:2px;background:#6b9bc8"></div><span class="t" style="top:786.35px;left:715.77px;font-size:25px;line-height:25px;font-weight:400;color:#1a2b33;transform:scaleX(0.9840);">ac6eb46</span><div style="position:absolute;left:826.25px;top:788px;width:23.5px;height:19.75px;border-radius:2px;background:#9176c7"></div><span class="t" style="top:786.35px;left:858.28px;font-size:25px;line-height:25px;font-weight:400;color:#1a2b33;transform:scaleX(0.9742);">0e4ed5a</span><div style="position:absolute;left:971.25px;top:788px;width:23.5px;height:19.75px;border-radius:2px;background:#fac866"></div><span class="t" style="top:786.35px;left:1002.76px;font-size:25px;line-height:25px;font-weight:400;color:#1a2b33;transform:scaleX(0.9948);">eeb0024</span><div style="position:absolute;left:1116.25px;top:788px;width:23.5px;height:19.75px;border-radius:2px;background:#2a6ec0"></div><span class="t" style="top:786.35px;left:1147.03px;font-size:25px;line-height:25px;font-weight:400;color:#1a2b33;transform:scaleX(0.9691);">e20746a</span><div style="position:absolute;left:1259.25px;top:788px;width:23.5px;height:19.75px;border-radius:2px;background:#6554c4"></div><span class="t" style="top:786.35px;left:1290.74px;font-size:25px;line-height:25px;font-weight:400;color:#1a2b33;transform:scaleX(1.0079);">7d22037</span><div style="position:absolute;left:1733.25px;top:788px;width:23.5px;height:19.75px;border-radius:2px;background:#6b9bc8"></div><span class="t" style="top:786.35px;left:1766.20px;font-size:25px;line-height:25px;font-weight:400;color:#1a2b33;transform:scaleX(1.0322);">totalErrors</span><span class="t" style="top:876.83px;left:677.70px;font-size:41.2px;line-height:41.2px;font-weight:400;color:#1a2b33;transform:scaleX(1.0498);">Top Actions Triggering Errors</span><div style="position:absolute;left:678px;top:942px;width:1247px;height:900px;border:2px solid #dfe5ea;border-radius:8px"></div><div style="position:absolute;left:1278px;top:944px;width:2px;height:860px;background:#dfe5ea"></div><div style="position:absolute;left:1736px;top:944px;width:2px;height:860px;background:#dfe5ea"></div><div style="position:absolute;left:680px;top:1012px;width:1247px;height:2px;background:#dfe5ea"></div><div style="position:absolute;left:680px;top:1082px;width:1247px;height:2px;background:#dfe5ea"></div><div style="position:absolute;left:680px;top:1152px;width:1247px;height:2px;background:#dfe5ea"></div><div style="position:absolute;left:680px;top:1258px;width:1247px;height:2px;background:#dfe5ea"></div><div style="position:absolute;left:680px;top:1364px;width:1247px;height:2px;background:#dfe5ea"></div><div style="position:absolute;left:680px;top:1434px;width:1247px;height:2px;background:#dfe5ea"></div><div style="position:absolute;left:680px;top:1504px;width:1247px;height:2px;background:#dfe5ea"></div><div style="position:absolute;left:680px;top:1574px;width:1247px;height:2px;background:#dfe5ea"></div><div style="position:absolute;left:680px;top:1644px;width:1247px;height:2px;background:#dfe5ea"></div><div style="position:absolute;left:680px;top:1714px;width:1247px;height:2px;background:#dfe5ea"></div><div style="position:absolute;left:680px;top:1784px;width:1247px;height:2px;background:#dfe5ea"></div><span class="t" style="top:966.61px;left:695.72px;font-size:24.7px;line-height:24.7px;font-weight:700;color:#1a2b33;transform:scaleX(1.0319);">Action Name</span><span class="t" style="top:966.61px;left:1296.00px;font-size:24.7px;line-height:24.7px;font-weight:700;color:#1a2b33;transform:scaleX(1.0465);">View Name</span><span class="t" style="top:966.61px;left:1773.50px;font-size:24.7px;line-height:24.7px;font-weight:700;color:#1a2b33;">Total Errors</span><span class="t" style="top:1036.61px;left:695.73px;font-size:24.7px;line-height:24.7px;font-weight:400;color:#1a2b33;transform:scaleX(1.0172);">click on Last 15 minutes</span><span class="t" style="top:1036.61px;left:1297.00px;font-size:24.7px;line-height:24.7px;font-weight:400;color:#1a2b33;transform:scaleX(1.0235);">/</span><span class="t" style="top:1036.61px;left:1868.39px;font-size:24.7px;line-height:24.7px;font-weight:400;color:#1a2b33;transform:scaleX(1.0526);">133</span><span class="t" style="top:1106.61px;left:695.72px;font-size:24.7px;line-height:24.7px;font-weight:400;color:#1a2b33;transform:scaleX(1.0313);">click on Combine all queries into one chart</span><span class="t" style="top:1106.61px;left:1297.00px;font-size:24.7px;line-height:24.7px;font-weight:400;color:#1a2b33;transform:scaleX(1.0235);">/</span><span class="t" style="top:1106.61px;left:1868.39px;font-size:24.7px;line-height:24.7px;font-weight:400;color:#1a2b33;transform:scaleX(1.0526);">105</span><span class="t" style="top:1176.61px;left:695.74px;font-size:24.7px;line-height:24.7px;font-weight:400;color:#1a2b33;transform:scaleX(1.0075);">click on APM Metrics Logs Events Alerts Grafana</span><span class="t" style="top:1212.61px;left:694.68px;font-size:24.7px;line-height:24.7px;font-weight:400;color:#1a2b33;transform:scaleX(1.0334);">Dashboards Infrastructure ASM Admin RUM</span><span class="t" style="top:1176.61px;left:1297.00px;font-size:24.7px;line-height:24.7px;font-weight:400;color:#1a2b33;transform:scaleX(1.0235);">/</span><span class="t" style="top:1176.61px;left:1882.98px;font-size:24.7px;line-height:24.7px;font-weight:400;color:#1a2b33;transform:scaleX(1.0192);">79</span><span class="t" style="top:1282.61px;left:695.71px;font-size:24.7px;line-height:24.7px;font-weight:400;color:#1a2b33;transform:scaleX(1.0381);">click on Analyze your application performance</span><span class="t" style="top:1318.61px;left:694.69px;font-size:24.7px;line-height:24.7px;font-weight:400;color:#1a2b33;transform:scaleX(1.0320);">Last 15 minutes</span><span class="t" style="top:1282.61px;left:1297.00px;font-size:24.7px;line-height:24.7px;font-weight:400;color:#1a2b33;transform:scaleX(1.0235);">/</span><span class="t" style="top:1282.61px;left:1882.98px;font-size:24.7px;line-height:24.7px;font-weight:400;color:#1a2b33;transform:scaleX(1.0192);">78</span><span class="t" style="top:1388.61px;left:695.73px;font-size:24.7px;line-height:24.7px;font-weight:400;color:#1a2b33;transform:scaleX(1.0222);">click on Last 5 minutes</span><span class="t" style="top:1388.61px;left:1297.00px;font-size:24.7px;line-height:24.7px;font-weight:400;color:#1a2b33;transform:scaleX(1.0235);">/</span><span class="t" style="top:1388.61px;left:1882.98px;font-size:24.7px;line-height:24.7px;font-weight:400;color:#1a2b33;transform:scaleX(1.0192);">75</span><span class="t" style="top:1458.61px;left:695.74px;font-size:24.7px;line-height:24.7px;font-weight:400;color:#1a2b33;transform:scaleX(1.0114);">click on Run</span><span class="t" style="top:1458.61px;left:1297.00px;font-size:24.7px;line-height:24.7px;font-weight:400;color:#1a2b33;transform:scaleX(1.0235);">/</span><span class="t" style="top:1458.61px;left:1882.98px;font-size:24.7px;line-height:24.7px;font-weight:400;color:#1a2b33;transform:scaleX(1.0192);">70</span><span class="t" style="top:1528.61px;left:695.75px;font-size:24.7px;line-height:24.7px;font-weight:400;color:#1a2b33;transform:scaleX(1.0033);">click on Views</span><span class="t" style="top:1528.61px;left:1297.00px;font-size:24.7px;line-height:24.7px;font-weight:400;color:#1a2b33;transform:scaleX(1.0235);">/</span><span class="t" style="top:1528.61px;left:1882.98px;font-size:24.7px;line-height:24.7px;font-weight:400;color:#1a2b33;transform:scaleX(1.0192);">55</span><span class="t" style="top:1598.61px;left:695.73px;font-size:24.7px;line-height:24.7px;font-weight:400;color:#1a2b33;transform:scaleX(1.0205);">click on Last Hour</span><span class="t" style="top:1598.61px;left:1297.00px;font-size:24.7px;line-height:24.7px;font-weight:400;color:#1a2b33;transform:scaleX(1.0235);">/</span><span class="t" style="top:1598.61px;left:1882.98px;font-size:24.7px;line-height:24.7px;font-weight:400;color:#1a2b33;transform:scaleX(1.0192);">55</span><span class="t" style="top:1668.61px;left:695.72px;font-size:24.7px;line-height:24.7px;font-weight:400;color:#1a2b33;transform:scaleX(1.0280);">click on Deployments</span><span class="t" style="top:1668.61px;left:1297.00px;font-size:24.7px;line-height:24.7px;font-weight:400;color:#1a2b33;transform:scaleX(1.0235);">/</span><span class="t" style="top:1668.61px;left:1882.98px;font-size:24.7px;line-height:24.7px;font-weight:400;color:#1a2b33;transform:scaleX(1.0192);">33</span><span class="t" style="top:1738.61px;left:695.74px;font-size:24.7px;line-height:24.7px;font-weight:400;color:#1a2b33;transform:scaleX(1.0098);">click on =</span><span class="t" style="top:1738.61px;left:1297.00px;font-size:24.7px;line-height:24.7px;font-weight:400;color:#1a2b33;transform:scaleX(1.0235);">/</span><span class="t" style="top:1738.61px;left:1882.98px;font-size:24.7px;line-height:24.7px;font-weight:400;color:#1a2b33;transform:scaleX(1.0192);">33</span><span class="t" style="top:876.83px;left:1948.92px;font-size:41.2px;line-height:41.2px;font-weight:400;color:#1a2b33;transform:scaleX(1.0406);">Ongoing Issues</span><div style="position:absolute;left:1949px;top:942px;width:1873px;height:900px;border:2px solid #dfe5ea;border-radius:8px"></div><div style="position:absolute;left:2422px;top:944px;width:2px;height:860px;background:#dfe5ea"></div><div style="position:absolute;left:2566px;top:944px;width:2px;height:860px;background:#dfe5ea"></div><div style="position:absolute;left:2854px;top:944px;width:2px;height:860px;background:#dfe5ea"></div><div style="position:absolute;left:3037px;top:944px;width:2px;height:860px;background:#dfe5ea"></div><div style="position:absolute;left:3231px;top:944px;width:2px;height:860px;background:#dfe5ea"></div><div style="position:absolute;left:3427px;top:944px;width:2px;height:860px;background:#dfe5ea"></div><div style="position:absolute;left:3701px;top:944px;width:2px;height:860px;background:#dfe5ea"></div><div style="position:absolute;left:1951px;top:1048px;width:1873px;height:2px;background:#dfe5ea"></div><div style="position:absolute;left:1951px;top:1262px;width:1873px;height:2px;background:#dfe5ea"></div><div style="position:absolute;left:1951px;top:1440px;width:1873px;height:2px;background:#dfe5ea"></div><div style="position:absolute;left:1951px;top:1594px;width:1873px;height:2px;background:#dfe5ea"></div><div style="position:absolute;left:1951px;top:1772px;width:1873px;height:2px;background:#dfe5ea"></div><span class="t" style="top:984.61px;left:1966.99px;font-size:24.7px;line-height:24.7px;font-weight:700;color:#1a2b33;transform:scaleX(1.0096);">Group ID</span><span class="t" style="top:984.61px;left:2440.00px;font-size:24.7px;line-height:24.7px;font-weight:700;color:#1a2b33;transform:scaleX(1.0091);">Type</span><span class="t" style="top:984.61px;left:2582.99px;font-size:24.7px;line-height:24.7px;font-weight:700;color:#1a2b33;transform:scaleX(1.0030);">Error Message</span><span class="t" style="top:984.61px;left:2871.51px;font-size:24.7px;line-height:24.7px;font-weight:700;color:#1a2b33;transform:scaleX(0.9899);">Occurrences</span><span class="t" style="top:966.61px;left:3053.71px;font-size:24.7px;line-height:24.7px;font-weight:700;color:#1a2b33;transform:scaleX(1.0196);">First</span><span class="t" style="top:1002.61px;left:3054.76px;font-size:24.7px;line-height:24.7px;font-weight:700;color:#1a2b33;transform:scaleX(0.9926);">Occurrence</span><span class="t" style="top:966.61px;left:3248.00px;font-size:24.7px;line-height:24.7px;font-weight:700;color:#1a2b33;">Last</span><span class="t" style="top:1002.61px;left:3249.01px;font-size:24.7px;line-height:24.7px;font-weight:700;color:#1a2b33;transform:scaleX(0.9926);">Occurrence</span><span class="t" style="top:984.61px;left:3444.21px;font-size:24.7px;line-height:24.7px;font-weight:700;color:#1a2b33;transform:scaleX(1.0397);">Chart</span><span class="t" style="top:984.61px;left:3718.01px;font-size:24.7px;line-height:24.7px;font-weight:700;color:#1a2b33;transform:scaleX(0.9888);">Actions</span><span class="t" style="top:1144.61px;left:1967.00px;font-size:24.7px;line-height:24.7px;font-weight:400;color:#1a2b33;">a8d4874068c1a401afca0dc36c196b0a</span><span class="t" style="top:1072.61px;left:2582.89px;font-size:24.7px;line-height:24.7px;font-weight:400;color:#1a2b33;transform:scaleX(1.0529);">Uncaught</span><span class="t" style="top:1108.61px;left:2583.99px;font-size:24.7px;line-height:24.7px;font-weight:400;color:#1a2b33;transform:scaleX(1.0105);">&quot;ResizeObserver loop</span><span class="t" style="top:1144.61px;left:2583.93px;font-size:24.7px;line-height:24.7px;font-weight:400;color:#1a2b33;transform:scaleX(1.0679);">completed with</span><span class="t" style="top:1180.61px;left:2582.88px;font-size:24.7px;line-height:24.7px;font-weight:400;color:#1a2b33;transform:scaleX(1.0605);">undelivered</span><span class="t" style="top:1216.61px;left:2582.86px;font-size:24.7px;line-height:24.7px;font-weight:400;color:#1a2b33;transform:scaleX(1.0699);">notifications.&quot;</span><span class="t" style="top:1144.61px;left:2978.97px;font-size:24.7px;line-height:24.7px;font-weight:400;color:#1a2b33;transform:scaleX(1.0256);">820</span><span class="t" style="top:1108.61px;left:3053.76px;font-size:24.7px;line-height:24.7px;font-weight:400;color:#1a2b33;transform:scaleX(0.9939);">Nov 4, 2024</span><span class="t" style="top:1144.61px;left:3054.72px;font-size:24.7px;line-height:24.7px;font-weight:400;color:#1a2b33;transform:scaleX(1.0250);">at</span><span class="t" style="top:1180.61px;left:3053.76px;font-size:24.7px;line-height:24.7px;font-weight:400;color:#1a2b33;transform:scaleX(0.9965);">10:52:43.961</span><span class="t" style="top:1108.61px;left:3247.96px;font-size:24.7px;line-height:24.7px;font-weight:400;color:#1a2b33;transform:scaleX(1.0176);">Nov 11, 2024</span><span class="t" style="top:1144.61px;left:3248.97px;font-size:24.7px;line-height:24.7px;font-weight:400;color:#1a2b33;transform:scaleX(1.0250);">at</span><span class="t" style="top:1180.61px;left:3248.00px;font-size:24.7px;line-height:24.7px;font-weight:400;color:#1a2b33;transform:scaleX(1.0021);">10:34:25.359</span><svg style="position:absolute;left:3600px;top:1086px" width="100" height="140" viewBox="3600 1086 100 140" fill="#e3364e"><rect x="3639.00" y="1155.90" width="2.4" height="59.8"/><rect x="3649.60" y="1202.50" width="2.4" height="13.2"/><rect x="3662.60" y="1208.90" width="2.4" height="6.8"/></svg><svg style="position:absolute;left:3747.1px;top:1139.6px" width="32" height="32" viewBox="0 0 24 24" fill="none" stroke="#0a6cc4" stroke-width="2" stroke-linecap="round" stroke-linejoin="round"><path d="M18 13v6a2 2 0 0 1-2 2H5a2 2 0 0 1-2-2V8a2 2 0 0 1 2-2h6"/><polyline points="15 3 21 3 21 9"/><line x1="10" y1="14" x2="21" y2="3"/></svg><span class="t" style="top:1340.61px;left:1967.00px;font-size:24.7px;line-height:24.7px;font-weight:400;color:#1a2b33;">ee67b560ac6d65697578cc6c71838c7d</span><span class="t" style="top:1340.61px;left:2440.00px;font-size:24.7px;line-height:24.7px;font-weight:400;color:#1a2b33;transform:scaleX(1.0157);">TypeError</span><span class="t" style="top:1286.61px;left:2583.98px;font-size:24.7px;line-height:24.7px;font-weight:400;color:#1a2b33;transform:scaleX(1.0224);">Cannot read</span><span class="t" style="top:1322.61px;left:2582.85px;font-size:24.7px;line-height:24.7px;font-weight:400;color:#1a2b33;transform:scaleX(1.0741);">properties of</span><span class="t" style="top:1358.61px;left:2582.89px;font-size:24.7px;line-height:24.7px;font-weight:400;color:#1a2b33;transform:scaleX(1.0542);">undefined (reading</span><span class="t" style="top:1394.61px;left:2583.92px;font-size:24.7px;line-height:24.7px;font-weight:400;color:#1a2b33;transform:scaleX(1.0783);">'length')</span><span class="t" style="top:1340.61px;left:2978.97px;font-size:24.7px;line-height:24.7px;font-weight:400;color:#1a2b33;transform:scaleX(1.0256);">630</span><span class="t" style="top:1304.61px;left:3053.76px;font-size:24.7px;line-height:24.7px;font-weight:400;color:#1a2b33;transform:scaleX(0.9939);">Nov 4, 2024</span><span class="t" style="top:1340.61px;left:3054.72px;font-size:24.7px;line-height:24.7px;font-weight:400;color:#1a2b33;transform:scaleX(1.0250);">at</span><span class="t" style="top:1376.61px;left:3053.76px;font-size:24.7px;line-height:24.7px;font-weight:400;color:#1a2b33;transform:scaleX(0.9965);">10:49:47.022</span><span class="t" style="top:1304.61px;left:3247.96px;font-size:24.7px;line-height:24.7px;font-weight:400;color:#1a2b33;transform:scaleX(1.0176);">Nov 11, 2024</span><span class="t" style="top:1340.61px;left:3248.97px;font-size:24.7px;line-height:24.7px;font-weight:400;color:#1a2b33;transform:scaleX(1.0250);">at</span><span class="t" style="top:1376.61px;left:3248.00px;font-size:24.7px;line-height:24.7px;font-weight:400;color:#1a2b33;transform:scaleX(1.0021);">10:33:12.049</span><svg style="position:absolute;left:3600px;top:1282px" width="100" height="140" viewBox="3600 1282 100 140" fill="#e3364e"><rect x="3649.60" y="1334.70" width="2.4" height="77"/><rect x="3646.80" y="1398.70" width="2.8" height="13"/><rect x="3636.90" y="1410.50" width="2" height="1.2"/><rect x="3663.00" y="1410.50" width="2" height="1.2"/></svg><svg style="position:absolute;left:3747.1px;top:1335.6px" width="32" height="32" viewBox="0 0 24 24" fill="none" stroke="#0a6cc4" stroke-width="2" stroke-linecap="round" stroke-linejoin="round"><path d="M18 13v6a2 2 0 0 1-2 2H5a2 2 0 0 1-2-2V8a2 2 0 0 1 2-2h6"/><polyline points="15 3 21 3 21 9"/><line x1="10" y1="14" x2="21" y2="3"/></svg><span class="t" style="top:1506.61px;left:1966.98px;font-size:24.7px;line-height:24.7px;font-weight:400;color:#1a2b33;transform:scaleX(1.0154);">930b269df21b0cd3af47246990520770</span><span class="t" style="top:1506.61px;left:2437.90px;font-size:24.7px;line-height:24.7px;font-weight:400;color:#1a2b33;transform:scaleX(1.0509);">Error</span><span class="t" style="top:1488.61px;left:2582.98px;font-size:24.7px;line-height:24.7px;font-weight:400;color:#1a2b33;transform:scaleX(1.0100);">Request was replaced</span><span class="t" style="top:1524.61px;left:2582.91px;font-size:24.7px;line-height:24.7px;font-weight:400;color:#1a2b33;transform:scaleX(1.0451);">by another request</span><span class="t" style="top:1506.61px;left:2978.97px;font-size:24.7px;line-height:24.7px;font-weight:400;color:#1a2b33;transform:scaleX(1.0256);">271</span><span class="t" style="top:1470.61px;left:3053.76px;font-size:24.7px;line-height:24.7px;font-weight:400;color:#1a2b33;transform:scaleX(0.9939);">Nov 4, 2024</span><span class="t" style="top:1506.61px;left:3054.72px;font-size:24.7px;line-height:24.7px;font-weight:400;color:#1a2b33;transform:scaleX(1.0250);">at</span><span class="t" style="top:1542.61px;left:3053.76px;font-size:24.7px;line-height:24.7px;font-weight:400;color:#1a2b33;transform:scaleX(0.9965);">10:52:44.082</span><span class="t" style="top:1470.61px;left:3247.96px;font-size:24.7px;line-height:24.7px;font-weight:400;color:#1a2b33;transform:scaleX(1.0176);">Nov 11, 2024</span><span class="t" style="top:1506.61px;left:3248.97px;font-size:24.7px;line-height:24.7px;font-weight:400;color:#1a2b33;transform:scaleX(1.0250);">at</span><span class="t" style="top:1542.61px;left:3248.00px;font-size:24.7px;line-height:24.7px;font-weight:400;color:#1a2b33;transform:scaleX(1.0021);">10:35:32.945</span><svg style="position:absolute;left:3600px;top:1448px" width="100" height="140" viewBox="3600 1448 100 140" fill="#e3364e"><rect x="3649.60" y="1511.50" width="2.4" height="66.2"/><rect x="3639.10" y="1571.70" width="2.4" height="6"/><rect x="3662.60" y="1571.70" width="2.4" height="6"/></svg><svg style="position:absolute;left:3747.1px;top:1501.6px" width="32" height="32" viewBox="0 0 24 24" fill="none" stroke="#0a6cc4" stroke-width="2" stroke-linecap="round" stroke-linejoin="round"><path d="M18 13v6a2 2 0 0 1-2 2H5a2 2 0 0 1-2-2V8a2 2 0 0 1 2-2h6"/><polyline points="15 3 21 3 21 9"/><line x1="10" y1="14" x2="21" y2="3"/></svg><span class="t" style="top:1672.61px;left:1966.99px;font-size:24.7px;line-height:24.7px;font-weight:400;color:#1a2b33;transform:scaleX(1.0117);">5441eab6bf038eb1ad64c9b7a736e03b</span><span class="t" style="top:1672.61px;left:2440.00px;font-size:24.7px;line-height:24.7px;font-weight:400;color:#1a2b33;transform:scaleX(1.0157);">TypeError</span><span class="t" style="top:1618.61px;left:2583.98px;font-size:24.7px;line-height:24.7px;font-weight:400;color:#1a2b33;transform:scaleX(1.0224);">Cannot read</span><span class="t" style="top:1654.61px;left:2582.85px;font-size:24.7px;line-height:24.7px;font-weight:400;color:#1a2b33;transform:scaleX(1.0741);">properties of</span><span class="t" style="top:1690.61px;left:2582.89px;font-size:24.7px;line-height:24.7px;font-weight:400;color:#1a2b33;transform:scaleX(1.0542);">undefined (reading</span><span class="t" style="top:1726.61px;left:2583.98px;font-size:24.7px;line-height:24.7px;font-weight:400;color:#1a2b33;transform:scaleX(1.0174);">'message')</span><span class="t" style="top:1672.61px;left:2977.89px;font-size:24.7px;line-height:24.7px;font-weight:400;color:#1a2b33;transform:scaleX(1.0526);">130</span><span class="t" style="top:1636.61px;left:3053.76px;font-size:24.7px;line-height:24.7px;font-weight:400;color:#1a2b33;transform:scaleX(0.9939);">Nov 4, 2024</span><span class="t" style="top:1672.61px;left:3054.72px;font-size:24.7px;line-height:24.7px;font-weight:400;color:#1a2b33;transform:scaleX(1.0250);">at</span><span class="t" style="top:1708.61px;left:3053.74px;font-size:24.7px;line-height:24.7px;font-weight:400;color:#1a2b33;transform:scaleX(1.0036);">11:20:08.204</span><span class="t" style="top:1636.61px;left:3247.99px;font-size:24.7px;line-height:24.7px;font-weight:400;color:#1a2b33;transform:scaleX(1.0035);">Nov 10, 2024</span><span class="t" style="top:1672.61px;left:3248.97px;font-size:24.7px;line-height:24.7px;font-weight:400;color:#1a2b33;transform:scaleX(1.0250);">at</span><span class="t" style="top:1708.61px;left:3249.01px;font-size:24.7px;line-height:24.7px;font-weight:400;color:#1a2b33;transform:scaleX(0.9881);">23:15:44.354</span><svg style="position:absolute;left:3600px;top:1614px" width="100" height="140" viewBox="3600 1614 100 140" fill="#e3364e"><rect x="3649.60" y="1684.10" width="2.4" height="59.6"/></svg><svg style="position:absolute;left:3747.1px;top:1667.6px" width="32" height="32" viewBox="0 0 24 24" fill="none" stroke="#0a6cc4" stroke-width="2" stroke-linecap="round" stroke-linejoin="round"><path d="M18 13v6a2 2 0 0 1-2 2H5a2 2 0 0 1-2-2V8a2 2 0 0 1 2-2h6"/><polyline points="15 3 21 3 21 9"/><line x1="10" y1="14" x2="21" y2="3"/></svg></div></body></html>
